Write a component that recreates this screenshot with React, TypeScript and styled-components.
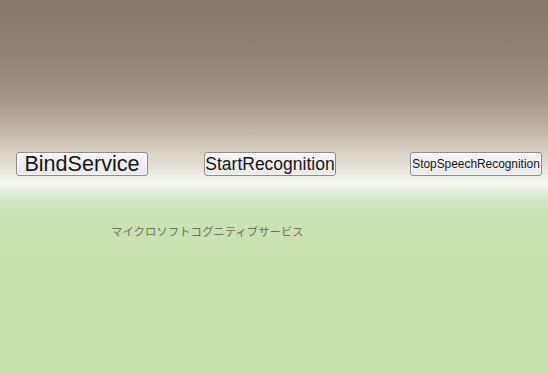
import styled, { createGlobalStyle } from "styled-components";

const GlobalStyle = createGlobalStyle`
    html, body {
        margin: 0;
        padding: 0;
        overflow: hidden;
    }
    body {
        font-family: "Liberation Sans", Arial, sans-serif;
    }
`;

const Scene = styled.div`
    width: 548px;
    height: 374px;
    display: flex;
    flex-direction: column;
    background: linear-gradient(
        to bottom,
        #867a6a 0px,
        #8d8171 50px,
        #a09585 95px,
        #bbb0a0 125px,
        #d6cec1 150px,
        #eae8e1 172px,
        #f7f8f4 184px,
        #e6efe0 190px,
        #d5e6c6 200px,
        #cde2b6 215px,
        #c9e0ad 260px,
        #c8dfab 374px
    );
`;

const ButtonRow = styled.div`
    display: flex;
    align-items: center;
    padding: 152px 0 0 16px;
`;

const UnityButton = styled.button<{ $size: number; $gap: number }>`
    box-sizing: border-box;
    width: 132px;
    height: 24px;
    margin-left: ${(p) => p.$gap}px;
    padding: 0;
    display: flex;
    align-items: center;
    justify-content: center;
    overflow: visible;
    white-space: nowrap;
    font-family: "Liberation Sans", Arial, sans-serif;
    font-size: ${(p) => p.$size}px;
    color: #161616;
    background: linear-gradient(to bottom, #f4f4f4, #e9e9e9);
    border: 1px solid #8c8c8c;
    border-radius: 3px;
    box-shadow: inset 0 0 0 1px rgba(255, 255, 255, 0.6);
`;

const Caption = styled.div`
    margin: 48px 0 0 111px;
    font-family: "Noto Sans CJK JP", sans-serif;
    font-size: 11.4px;
    line-height: 14px;
    color: #6b735f;
`;

export default function App() {
  return (
    <>
      <GlobalStyle />
      <Scene>
        <ButtonRow>
          <UnityButton $size={21.6} $gap={0}>BindService</UnityButton>
          <UnityButton $size={17.5} $gap={56}>StartRecognition</UnityButton>
          <UnityButton $size={11.9} $gap={74}>StopSpeechRecognition</UnityButton>
        </ButtonRow>
        <Caption>マイクロソフトコグニティブサービス</Caption>
      </Scene>
    </>
  );
}
